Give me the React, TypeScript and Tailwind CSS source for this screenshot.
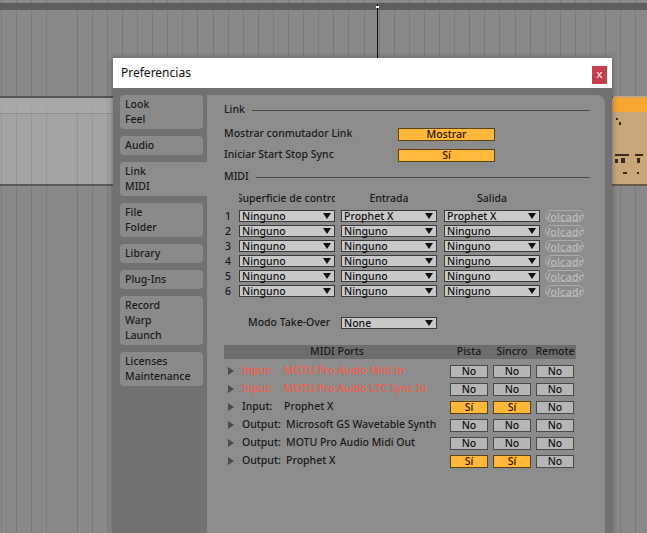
import React from "react";

const GRID =
  "bg-[#898989] bg-[repeating-linear-gradient(90deg,transparent_0px,transparent_1.1px,#7a7a7a_1.1px,#7a7a7a_2.1px,transparent_2.1px,transparent_15.1px)]";

function Arrow() {
  return (
    <svg width="8" height="6" viewBox="0 0 8 6" className="shrink-0">
      <path d="M0 0H8L4 6Z" fill="#111" />
    </svg>
  );
}

function Drop({ label }: { label: string }) {
  return (
    <div className="w-[96px] h-[12px] bg-[#c9c9c9] border border-[#3a3a3a] flex items-center justify-between pl-[2px] pr-[3px] text-[10.5px] leading-none text-[#111] shrink-0">
      <span className="whitespace-nowrap">{label}</span>
      <Arrow />
    </div>
  );
}

function Volcado() {
  return (
    <div className="w-[39px] h-[12px] rounded-full border border-[#acacac] text-[#bcbcbc] text-[11px] leading-none overflow-hidden flex items-center justify-center whitespace-nowrap shrink-0 ml-[5px]">
      <span className="shrink-0">Volcado</span>
    </div>
  );
}

function Btn({ on, label }: { on?: boolean; label: string }) {
  return (
    <div
      className={
        on
          ? "w-[38px] h-[13px] bg-[#ffb83a] border border-[#5b4314] flex items-center justify-center text-[10.5px] leading-none text-[#2a1600] shrink-0"
          : "w-[38px] h-[13px] bg-[#b6b6b6] border border-[#4a4a4a] flex items-center justify-center text-[10.5px] leading-none text-[#111] shrink-0"
      }
    >
      {label}
    </div>
  );
}

function Tab({ lines, selected }: { lines: string[]; selected?: boolean }) {
  return (
    <div
      className={
        selected
          ? "w-[87px] bg-[#8c8c8c] rounded-l-[4px] px-[5px] py-[2px] leading-[15px] text-[10.5px] text-[#1a1a1a]"
          : "w-[83px] bg-[#8a8a8a] rounded-[4px] px-[5px] py-[2px] leading-[15px] text-[10.5px] text-[#1a1a1a]"
      }
    >
      {lines.map((l) => (
        <div key={l}>{l}</div>
      ))}
    </div>
  );
}

function Section({ title }: { title: string }) {
  return (
    <div className="flex items-center h-[14px] text-[10.5px] text-[#1a1a1a]">
      <span>{title}</span>
      <div className="flex-1 h-px bg-[#4c4c4c] ml-[7px]" />
    </div>
  );
}

const ports = [
  { kind: "Input:", name: "MOTU Pro Audio Midi In", red: true, p: false, s: false },
  { kind: "Input:", name: "MOTU Pro Audio LTC Sync In", red: true, p: false, s: false },
  { kind: "Input:", name: "Prophet X", red: false, p: true, s: true },
  { kind: "Output:", name: "Microsoft GS Wavetable Synth", red: false, p: false, s: false },
  { kind: "Output:", name: "MOTU Pro Audio Midi Out", red: false, p: false, s: false },
  { kind: "Output:", name: "Prophet X", red: false, p: true, s: true },
];

export default function App() {
  return (
    <div className="relative w-[647px] h-[533px] overflow-hidden font-['Noto_Sans',sans-serif] bg-[#898989]">
      {/* background arrangement */}
      <div className="flex flex-col w-full h-full">
        <div className={`h-[3px] ${GRID}`} />
        <div className="h-[7px] bg-[#5e5e5e]" />
        <div className={`h-[86px] ${GRID}`} />
        <div className="h-[90px] flex">
          <div className="flex-1 flex flex-col bg-[#a4a4a4] bg-[repeating-linear-gradient(90deg,transparent_0px,transparent_1.1px,#979797_1.1px,#979797_2.1px,transparent_2.1px,transparent_15.1px)] border-t-2 border-b-2 border-t-[#555555] border-b-[#5a5a5a]">
            <div className="h-[16px] bg-[#acacac]/60 border-b border-[#8f8f8f]" />
          </div>
          <div className="relative w-[34px] flex flex-col bg-[#c8a67a] border-b-2 border-[#6a5a48]">
            <div className="h-[14px] mt-[2px] bg-[#f5a531]" />
            <div className="absolute left-[3px] top-[22px] w-[2px] h-[2px] bg-[#3a2a1a]" />
            <div className="absolute left-[6px] top-[26px] w-[2px] h-[3px] bg-[#3a2a1a]" />
            <div className="absolute left-[2px] top-[58px] w-[14px] h-[2px] bg-[#3a2a1a]" />
            <div className="absolute left-[2px] top-[63px] w-[3px] h-[4px] bg-[#3a2a1a]" />
            <div className="absolute left-[8px] top-[62px] w-[4px] h-[5px] bg-[#3a2a1a]" />
            <div className="absolute left-[22px] top-[58px] w-[8px] h-[2px] bg-[#3a2a1a]" />
            <div className="absolute left-[24px] top-[62px] w-[3px] h-[5px] bg-[#3a2a1a]" />
            <div className="absolute left-[10px] top-[76px] w-[4px] h-[2px] bg-[#3a2a1a]" />
            <div className="absolute left-[24px] top-[76px] w-[2px] h-[2px] bg-[#3a2a1a]" />
          </div>
        </div>
        <div className={`flex-1 ${GRID}`} />
      </div>

      {/* playhead */}
      <div className="absolute left-[377px] top-[4px] w-px h-[54px] bg-[#111]" />
      <div className="absolute left-[376px] top-[6px] w-[3px] h-[2px] bg-white" />

      {/* dialog */}
      <div className="absolute left-[113px] top-[58px] w-[499px] h-[480px] flex flex-col shadow-[0_0_6px_rgba(0,0,0,0.35)]">
        <div className="h-[30px] bg-white flex items-center justify-between pl-[8px] pr-[5px]">
          <span className="text-[12px] text-[#111]">Preferencias</span>
          <div className="w-[15px] h-[18px] mt-[3px] bg-[#c5404a] flex items-center justify-center text-white text-[11px] leading-none pb-[2px]">
            x
          </div>
        </div>
        <div className="flex-1 flex bg-[#717171] pt-[7px] font-medium">
          <div className="w-[94px] pl-[7px] flex flex-col gap-[7px]">
            <Tab lines={["Look", "Feel"]} />
            <Tab lines={["Audio"]} />
            <Tab lines={["Link", "MIDI"]} selected />
            <Tab lines={["File", "Folder"]} />
            <Tab lines={["Library"]} />
            <Tab lines={["Plug-Ins"]} />
            <Tab lines={["Record", "Warp", "Launch"]} />
            <Tab lines={["Licenses", "Maintenance"]} />
          </div>
          <div className="w-[398px] bg-[#8c8c8c] rounded-tr-[8px] pl-[17px] pr-[15px] pt-[8px] text-[10.5px] text-[#1a1a1a]">
            <Section title="Link" />
            <div className="flex items-center h-[14px] mt-[10px]">
              <span className="w-[174px]">Mostrar conmutador Link</span>
              <div className="w-[97px] h-[13px] bg-[#ffb83a] border border-[#5b4314] flex items-center justify-center leading-none text-[#2a1600]">
                Mostrar
              </div>
            </div>
            <div className="flex items-center h-[14px] mt-[7px]">
              <span className="w-[174px]">Iniciar Start Stop Sync</span>
              <div className="w-[97px] h-[13px] bg-[#ffb83a] border border-[#5b4314] flex items-center justify-center leading-none text-[#2a1600]">
                Sí
              </div>
            </div>
            <div className="mt-[8px]">
              <Section title="MIDI" />
            </div>
            <div className="flex items-center h-[14px] mt-[8px]">
              <div className="w-[15px]" />
              <div className="w-[96px] flex justify-center overflow-hidden whitespace-nowrap">
                <span className="shrink-0">Superficie de contro</span>
              </div>
              <div className="w-[96px] ml-[6px] flex justify-center">Entrada</div>
              <div className="w-[96px] ml-[7px] flex justify-center">Salida</div>
            </div>
            <div className="flex flex-col gap-[3px] mt-[4px]">
              {[1, 2, 3, 4, 5, 6].map((n) => (
                <div key={n} className="flex items-center h-[12px]">
                  <span className="w-[15px] pl-[1px] leading-none">{n}</span>
                  <Drop label="Ninguno" />
                  <div className="ml-[6px]">
                    <Drop label={n === 1 ? "Prophet X" : "Ninguno"} />
                  </div>
                  <div className="ml-[7px]">
                    <Drop label={n === 1 ? "Prophet X" : "Ninguno"} />
                  </div>
                  <Volcado />
                </div>
              ))}
            </div>
            <div className="flex items-center h-[12px] mt-[20px]">
              <span className="w-[117px] pl-[24px] whitespace-nowrap">Modo Take-Over</span>
              <Drop label="None" />
            </div>
            <div className="w-[352px] mt-[16px]">
              <div className="h-[14px] bg-[#6d6d6d] flex items-center">
                <div className="w-[226px] flex justify-center">MIDI Ports</div>
                <div className="w-[38px] flex justify-center">Pista</div>
                <div className="w-[38px] ml-[5px] flex justify-center">Sincro</div>
                <div className="w-[38px] ml-[5px] flex justify-center">Remote</div>
              </div>
              <div className="flex flex-col pt-[3px]">
                {ports.map((p, i) => (
                  <div key={i} className="flex items-center h-[18px]">
                    <div className="w-[18px] pl-[4px]">
                      <svg width="6" height="8" viewBox="0 0 6 8">
                        <path d="M0 0L6 4L0 8Z" fill="#4a4a4a" />
                      </svg>
                    </div>
                    <div
                      className={
                        p.red
                          ? "w-[208px] flex whitespace-nowrap text-[#f5604a]"
                          : "w-[208px] flex whitespace-nowrap text-[#1a1a1a]"
                      }
                    >
                      <span className={p.kind === "Input:" ? "w-[42px]" : "w-[44px]"}>{p.kind}</span>
                      <span>{p.name}</span>
                    </div>
                    <Btn on={p.p} label={p.p ? "Sí" : "No"} />
                    <div className="ml-[5px]">
                      <Btn on={p.s} label={p.s ? "Sí" : "No"} />
                    </div>
                    <div className="ml-[5px]">
                      <Btn label="No" />
                    </div>
                  </div>
                ))}
              </div>
            </div>
          </div>
        </div>
      </div>
    </div>
  );
}
